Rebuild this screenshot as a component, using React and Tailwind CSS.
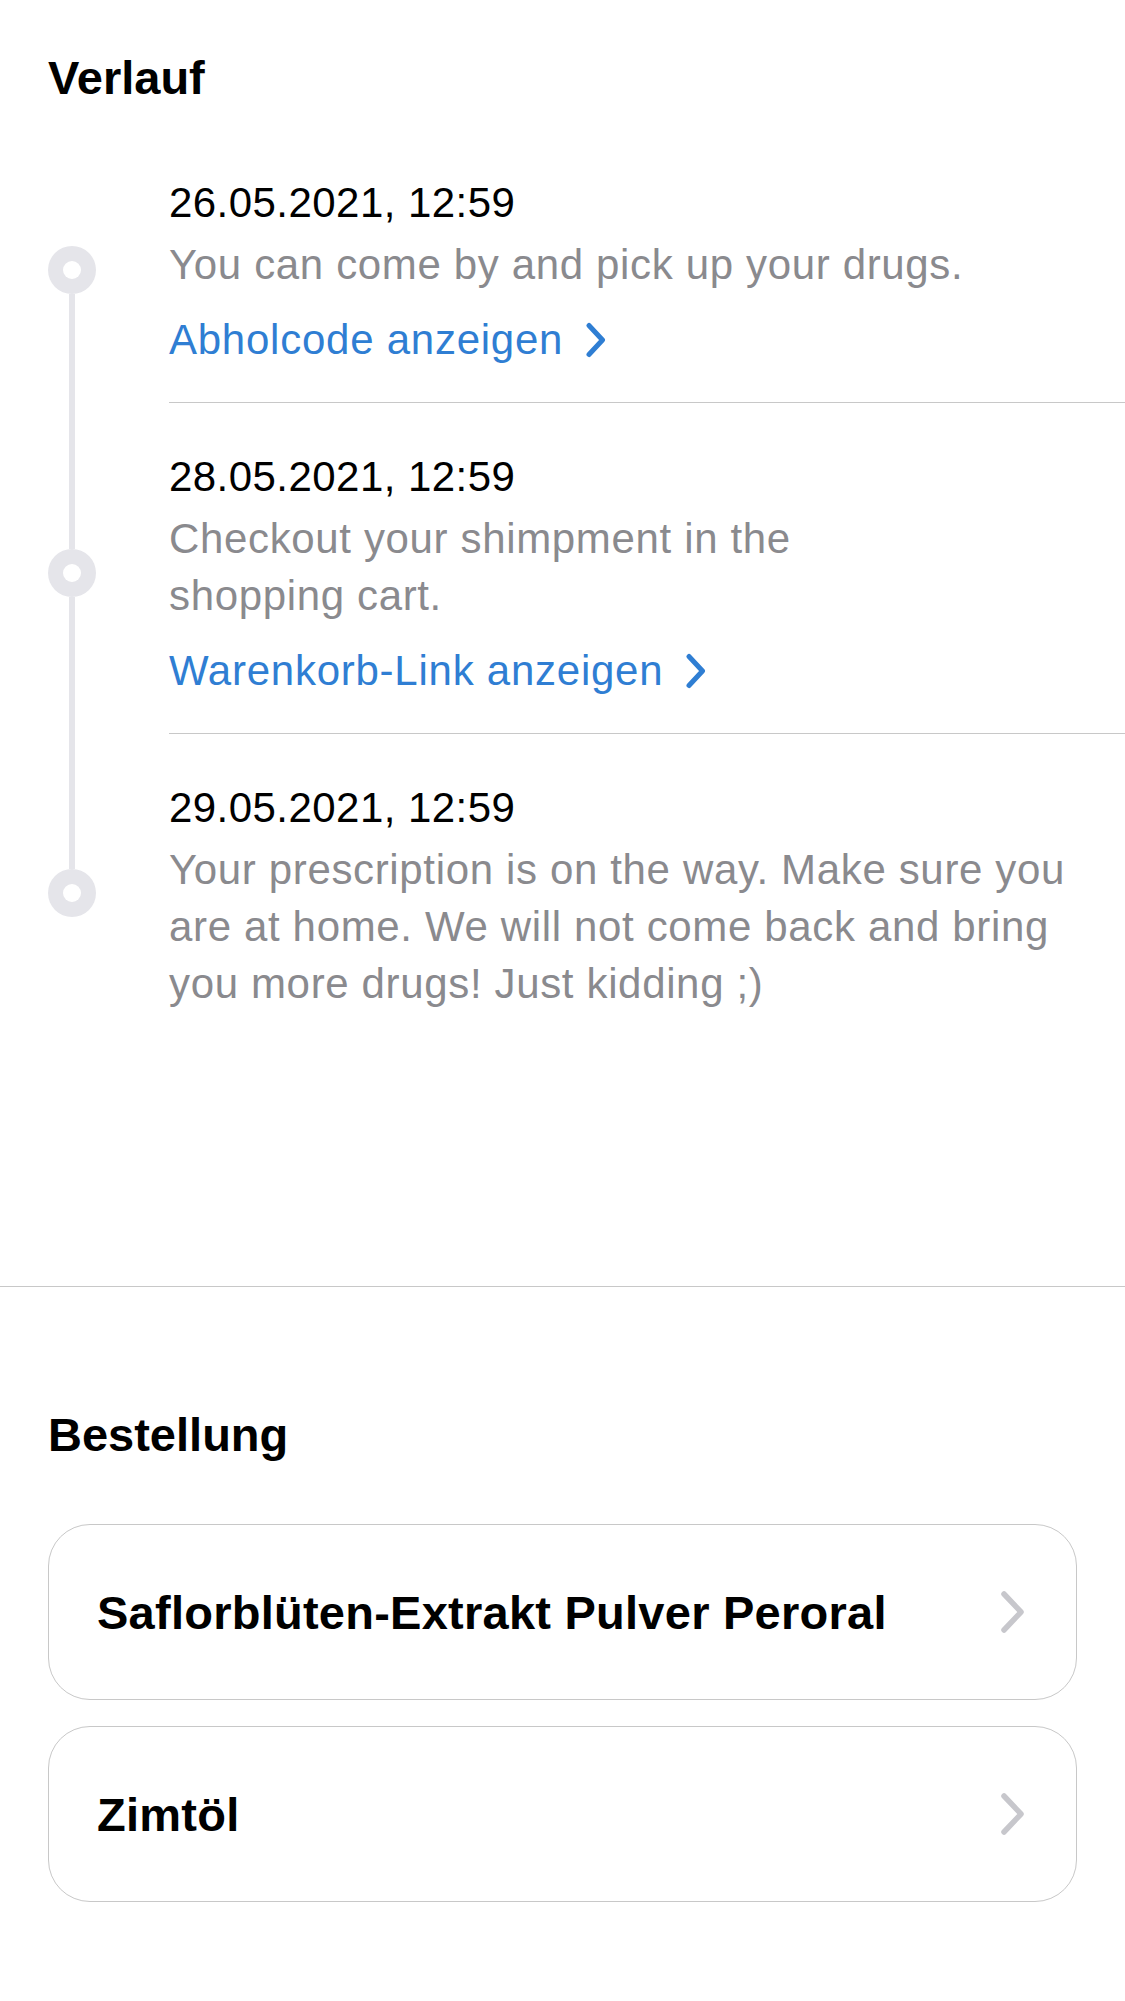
import React from "react";

const events = [
  {
    date: "26.05.2021, 12:59",
    lines: ["You can come by and pick up your drugs."],
    link: "Abholcode anzeigen",
  },
  {
    date: "28.05.2021, 12:59",
    lines: ["Checkout your shimpment in the", "shopping cart."],
    link: "Warenkorb-Link anzeigen",
  },
  {
    date: "29.05.2021, 12:59",
    lines: [
      "Your prescription is on the way. Make sure you",
      "are at home. We will not come back and bring",
      "you more drugs! Just kidding ;)",
    ],
  },
];

const items = ["Saflorblüten-Extrakt Pulver Peroral", "Zimtöl"];

function BlueChevron() {
  return (
    <svg width="22" height="36" viewBox="0 0 22 36" className="ml-[22px] shrink-0">
      <path d="M4 3.5 L17.5 18 L4 32.5" fill="none" stroke="#2f7ed3" strokeWidth="5" strokeLinecap="round" strokeLinejoin="round" />
    </svg>
  );
}

function GrayChevron() {
  return (
    <svg width="26" height="44" viewBox="0 0 26 44" className="shrink-0">
      <path d="M4 4 L21 22 L4 40" fill="none" stroke="#c7c7cc" strokeWidth="5.5" strokeLinecap="round" strokeLinejoin="round" />
    </svg>
  );
}

export default function App() {
  return (
    <div className="w-[1125px] min-h-[2001px] bg-white text-black font-['Liberation_Sans',Arial,sans-serif]">
      <h1 className="pl-[48px] pt-[49px] text-[47px] leading-[57px] font-bold">Verlauf</h1>

      {/* Timeline */}
      <div className="mt-[23px]">
        {events.map((ev, i) => {
          const first = i === 0;
          const last = i === events.length - 1;
          return (
            <div key={ev.date} className="flex pl-[48px]">
              <div className="w-[48px] shrink-0 flex flex-col items-center">
                <div className={`w-[6px] flex-[1_1_8px] ${first ? "" : "bg-[#e5e5ea]"}`} />
                <div className="w-[48px] h-[48px] rounded-full bg-[#e5e5ea] flex items-center justify-center shrink-0">
                  <div className="w-[18px] h-[18px] rounded-full bg-white" />
                </div>
                <div className={`w-[6px] flex-[1_1_0px] ${last ? "" : "bg-[#e5e5ea]"}`} />
              </div>
              <div
                className={`ml-[73px] flex-1 pt-[45px] ${
                  last ? "pb-[32px]" : "pb-[34px] border-b border-[#c8c8c8]"
                }`}
              >
                <p className="text-[42px] leading-[57px] tracking-[0.45px]">{ev.date}</p>
                <p className="mt-[5px] text-[42px] leading-[57px] tracking-[0.65px] text-[#8a8a8e]">
                  {ev.lines.map((l, j) => (
                    <span key={j} className="block whitespace-nowrap">
                      {l}
                    </span>
                  ))}
                </p>
                {ev.link && (
                  <div className="mt-[18px] flex items-center h-[57px] text-[42px] leading-[57px] tracking-[0.75px] text-[#2f7ed3]">
                    <span>{ev.link}</span>
                    <BlueChevron />
                  </div>
                )}
              </div>
            </div>
          );
        })}
      </div>

      <div className="mt-[242px] h-px bg-[#c8c8c8]" />

      <h2 className="pl-[48px] mt-[119px] text-[47px] leading-[57px] font-bold">Bestellung</h2>

      {/* Order items */}
      <div className="mx-[48px] mt-[61px] flex flex-col gap-[26px]">
        {items.map((name) => (
          <div
            key={name}
            className="h-[176px] rounded-[42px] border border-[#c8c8c8] pl-[48px] pr-[50px] flex items-center justify-between"
          >
            <span className="text-[47px] leading-[57px] font-bold tracking-[0.25px]">{name}</span>
            <GrayChevron />
          </div>
        ))}
      </div>
    </div>
  );
}
